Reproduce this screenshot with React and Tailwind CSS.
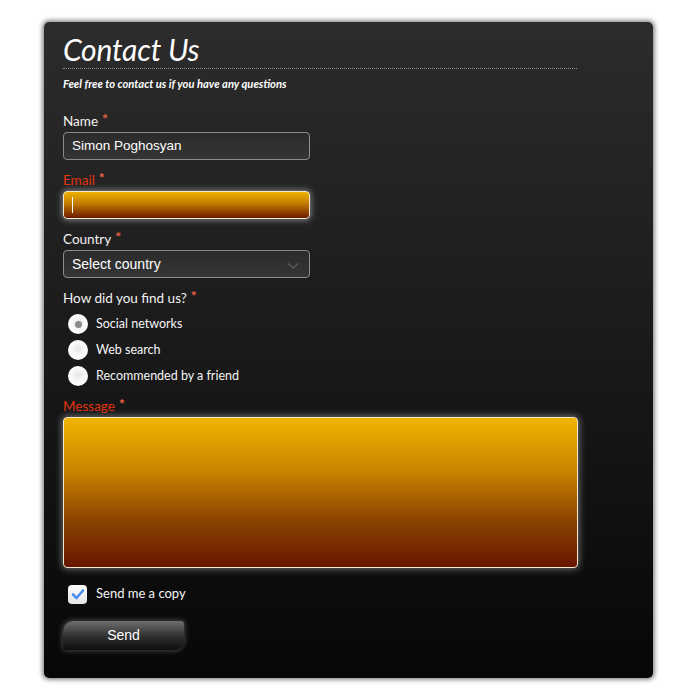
import React from "react";

const Req = () => <span className="text-[#f0624a] ml-[4px] relative -top-[2px] text-[14px] font-bold">*</span>;

function Label({ children, red }) {
  return (
    <div
      className={`h-[20px] leading-[18px] text-[13.5px] font-['Lato',sans-serif] ${red ? "text-[#e3340e]" : "text-[#f2f2f2]"}`}
    >
      {children}
      <Req />
    </div>
  );
}

function Radio({ checked, label }) {
  return (
    <div className="h-[26px] flex items-center pl-[5px]">
      <div className="w-[20px] h-[20px] rounded-full bg-[radial-gradient(circle_at_50%_45%,#e4e4e4_0%,#f8f8f8_40%,#ffffff_70%,#dcdcdc_100%)] flex items-center justify-center">
        {checked && <div className="w-[7px] h-[7px] rounded-full bg-[#8a8a8a]" />}
      </div>
      <span className="ml-[8px] text-[12.5px] text-[#f5f5f5] font-['Lato',sans-serif]">{label}</span>
    </div>
  );
}

export default function App() {
  return (
    <div className="w-[700px] h-[700px] bg-white pt-[22px] pl-[44px]">
      <div className="w-[609px] h-[656px] rounded-[5px] bg-[linear-gradient(to_bottom,#2c2c2c,#070707)] shadow-[0_0_4px_2px_rgba(0,0,0,0.45)] pl-[19px] pt-[9px]">
        <div className="w-[514px]">
          <div className="h-[36px] leading-[36px] text-[30px] italic font-normal text-white font-['Lato',sans-serif] tracking-[-0.2px]">Contact Us</div>
          <div className="border-b border-dotted border-[#8a8a8a] mt-[1px]" />
          <div className="mt-[7px] h-[16px] leading-[16px] text-[11.2px] italic font-bold text-white font-['Lato',sans-serif]">
            Feel free to contact us if you have any questions
          </div>
        </div>

        <div className="mt-[20px]">
          <Label>Name</Label>
          <div className="w-[247px] h-[28px] rounded-[4px] border border-[#8c8c8c] bg-[linear-gradient(to_bottom,#2b2b2b,#353535)] flex items-center pl-[8px] text-[13.5px] text-white font-['Liberation_Sans',sans-serif]">
            Simon Poghosyan
          </div>
        </div>

        <div className="mt-[11px]">
          <Label red>Email</Label>
          <div className="w-[247px] h-[28px] rounded-[4px] border border-[#f4e7d0] bg-[linear-gradient(to_bottom,#eeb200,#c27a00_45%,#6a1a00)] shadow-[0_0_6px_1px_rgba(255,255,255,0.45)] flex items-center pl-[8px]">
            <div className="w-[1px] h-[16px] bg-white" />
          </div>
        </div>

        <div className="mt-[11px]">
          <Label>Country</Label>
          <div className="w-[247px] h-[28px] rounded-[4px] border border-[#8c8c8c] bg-[linear-gradient(to_bottom,#2b2b2b,#353535)] flex items-center justify-between pl-[8px] pr-[10px] text-[14px] text-white font-['Liberation_Sans',sans-serif]">
            <span>Select country</span>
            <svg width="12" height="8" viewBox="0 0 12 8" className="mt-[3px]">
              <path d="M1 1.5 L6 6 L11 1.5" fill="none" stroke="#5a5a5a" strokeWidth="1.6" />
            </svg>
          </div>
        </div>

        <div className="mt-[11px]">
          <div className="h-[22px] leading-[18px] text-[13.5px] text-[#f2f2f2] font-['Lato',sans-serif]">
            How did you find us?<Req />
          </div>
          <Radio checked label="Social networks" />
          <Radio label="Web search" />
          <Radio label="Recommended by a friend" />
        </div>

        <div className="mt-[8px]">
          <Label red>Message</Label>
          <div className="w-[515px] h-[151px] rounded-[4px] border border-[#f4e7d0] bg-[linear-gradient(to_bottom,#f0b400,#c98400_35%,#8a4200_70%,#661600)] shadow-[0_0_7px_1px_rgba(255,255,255,0.4)]" />
        </div>

        <div className="mt-[13px] h-[26px] flex items-center pl-[5px]">
          <div className="w-[19px] h-[19px] rounded-[4px] bg-[linear-gradient(to_bottom,#ffffff,#e4e4e4)] flex items-center justify-center">
            <svg width="14" height="12" viewBox="0 0 14 12">
              <path d="M2 6.5 L5.5 10 L12 2.5" fill="none" stroke="#4a8ef0" strokeWidth="2.6" strokeLinecap="round" strokeLinejoin="round" />
            </svg>
          </div>
          <span className="ml-[9px] text-[13px] text-[#f5f5f5] font-['Lato',sans-serif]">Send me a copy</span>
        </div>

        <div className="mt-[14px] w-[121px] h-[29px] rounded-tl-[10px] rounded-br-[10px] rounded-tr-[3px] rounded-bl-[3px] bg-[linear-gradient(to_bottom,#6e6e6e,#2e2e2e_55%,#0e0e0e)] shadow-[0_0_5px_1px_rgba(255,255,255,0.25)] flex items-center justify-center text-[14px] text-white font-['Liberation_Sans',sans-serif]">
          Send
        </div>
      </div>
    </div>
  );
}
